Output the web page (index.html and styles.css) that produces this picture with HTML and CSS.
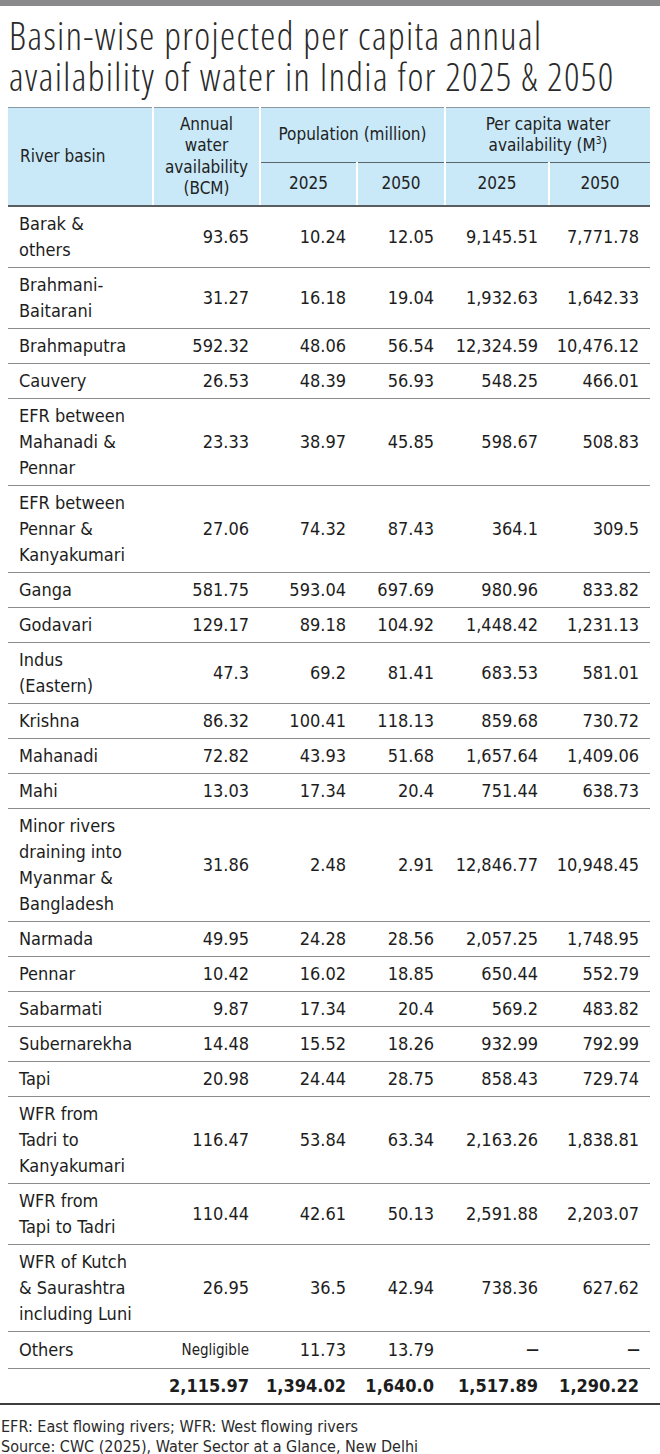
FILE: index.html
```html
<!DOCTYPE html>
<html>
<head>
<meta charset="utf-8">
<link rel="stylesheet" href="styles.css">
</head>
<body>
<div class="topbar"></div>
<h1 class="title"><span class="tl">Basin-wise projected per capita annual</span><span class="tl">availability of water in India for 2025 &amp; 2050</span></h1>
<table class="data">
<colgroup>
<col class="c1"><col class="c2"><col class="c3"><col class="c4"><col class="c5"><col class="c6">
</colgroup>
<thead>
<tr class="hr1">
<th rowspan="2" class="basin">River basin</th>
<th rowspan="2">Annual<br>water<br>availability<br>(BCM)</th>
<th colspan="2" class="grp">Population (million)</th>
<th colspan="2" class="grp">Per capita water<br>availability (M<sup>3</sup>)</th>
</tr>
<tr class="hr2">
<th>2025</th><th>2050</th><th>2025</th><th>2050</th>
</tr>
</thead>
<tbody>
<tr><td>Barak &amp;<br>others</td><td>93.65</td><td>10.24</td><td>12.05</td><td>9,145.51</td><td>7,771.78</td></tr>
<tr><td>Brahmani-<br>Baitarani</td><td>31.27</td><td>16.18</td><td>19.04</td><td>1,932.63</td><td>1,642.33</td></tr>
<tr><td>Brahmaputra</td><td>592.32</td><td>48.06</td><td>56.54</td><td>12,324.59</td><td>10,476.12</td></tr>
<tr><td>Cauvery</td><td>26.53</td><td>48.39</td><td>56.93</td><td>548.25</td><td>466.01</td></tr>
<tr><td>EFR between<br>Mahanadi &amp;<br>Pennar</td><td>23.33</td><td>38.97</td><td>45.85</td><td>598.67</td><td>508.83</td></tr>
<tr><td>EFR between<br>Pennar &amp;<br>Kanyakumari</td><td>27.06</td><td>74.32</td><td>87.43</td><td>364.1</td><td>309.5</td></tr>
<tr><td>Ganga</td><td>581.75</td><td>593.04</td><td>697.69</td><td>980.96</td><td>833.82</td></tr>
<tr><td>Godavari</td><td>129.17</td><td>89.18</td><td>104.92</td><td>1,448.42</td><td>1,231.13</td></tr>
<tr><td>Indus<br>(Eastern)</td><td>47.3</td><td>69.2</td><td>81.41</td><td>683.53</td><td>581.01</td></tr>
<tr><td>Krishna</td><td>86.32</td><td>100.41</td><td>118.13</td><td>859.68</td><td>730.72</td></tr>
<tr><td>Mahanadi</td><td>72.82</td><td>43.93</td><td>51.68</td><td>1,657.64</td><td>1,409.06</td></tr>
<tr><td>Mahi</td><td>13.03</td><td>17.34</td><td>20.4</td><td>751.44</td><td>638.73</td></tr>
<tr><td>Minor rivers<br>draining into<br>Myanmar &amp;<br>Bangladesh</td><td>31.86</td><td>2.48</td><td>2.91</td><td>12,846.77</td><td>10,948.45</td></tr>
<tr><td>Narmada</td><td>49.95</td><td>24.28</td><td>28.56</td><td>2,057.25</td><td>1,748.95</td></tr>
<tr><td>Pennar</td><td>10.42</td><td>16.02</td><td>18.85</td><td>650.44</td><td>552.79</td></tr>
<tr><td>Sabarmati</td><td>9.87</td><td>17.34</td><td>20.4</td><td>569.2</td><td>483.82</td></tr>
<tr><td>Subernarekha</td><td>14.48</td><td>15.52</td><td>18.26</td><td>932.99</td><td>792.99</td></tr>
<tr><td>Tapi</td><td>20.98</td><td>24.44</td><td>28.75</td><td>858.43</td><td>729.74</td></tr>
<tr><td>WFR from<br>Tadri to<br>Kanyakumari</td><td>116.47</td><td>53.84</td><td>63.34</td><td>2,163.26</td><td>1,838.81</td></tr>
<tr><td>WFR from<br>Tapi to Tadri</td><td>110.44</td><td>42.61</td><td>50.13</td><td>2,591.88</td><td>2,203.07</td></tr>
<tr><td>WFR of Kutch<br>&amp; Saurashtra<br>including Luni</td><td>26.95</td><td>36.5</td><td>42.94</td><td>738.36</td><td>627.62</td></tr>
<tr><td>Others</td><td class="small">Negligible</td><td>11.73</td><td>13.79</td><td><span class="dash">&ndash;</span></td><td><span class="dash">&ndash;</span></td></tr>
<tr class="total"><td></td><td>2,115.97</td><td>1,394.02</td><td>1,640.0</td><td>1,517.89</td><td>1,290.22</td></tr>
</tbody>
</table>
<div class="rule"></div>
<p class="notes">EFR: East flowing rivers; WFR: West flowing rivers<br>Source: CWC (2025), Water Sector at a Glance, New Delhi</p>
</body>
</html>
```

FILE: styles.css
```css
html, body {
  margin: 0;
  padding: 0;
  background: #ffffff;
}
body {
  font-family: "DejaVu Sans Condensed", "Liberation Sans Narrow", "Liberation Sans", sans-serif;
  color: #1d1d1d;
  width: 660px;
}
.topbar {
  height: 6px;
  background: #8a8a8c;
}
.title {
  margin: 9px 0 0 9px;
  font-family: "Open Sans", sans-serif;
  font-weight: 300;
  font-stretch: 75%;
  font-size: 38px;
  letter-spacing: 1.4px;
  color: #2a2a2a;
  height: 92px;
}
.tl {
  display: block;
  height: 41px;
  line-height: 41px;
  white-space: nowrap;
}
.data {
  margin-left: 8px;
  width: 642px;
  border-collapse: collapse;
  table-layout: fixed;
}
.c1 { width: 145px; }
.c2 { width: 107px; }
.c3 { width: 97px; }
.c4 { width: 88px; }
.c5 { width: 104px; }
.c6 { width: 101px; }
.data th {
  background: #c9e9f8;
  font-weight: normal;
  font-size: 17px;
  line-height: 21.5px;
  text-align: center;
  padding: 0 4px;
  border-left: 2px solid #ffffff;
  color: #222;
}
.data th:first-child { border-left: none; }
.hr1 th { border-top: 1px solid #8a9aa3; height: 54px; }
.hr1 th.basin { text-align: left; padding-left: 12px; border-left: none; }
.hr1 th.grp { border-bottom: 1px solid #59646b; }
.hr2 th { height: 42px; border-bottom: 2px solid #5a5d60; }
.hr2 th:first-child { border-left: 2px solid #ffffff; }
.hr1 th[rowspan] { border-bottom: 2px solid #5a5d60; }
.data sup { font-size: 10px; vertical-align: 7px; line-height: 0; }
.data td {
  font-size: 18px;
  line-height: 26px;
  padding: 4px 11px 4px 4px;
  text-align: right;
  border-bottom: 1px solid #8b8b8b;
  white-space: nowrap;
}
.data td:first-child {
  text-align: left;
  padding-left: 11px;
  padding-right: 0;
}
.data td.small { font-size: 15px; }
.dash {
  display: inline-block;
  font-size: 24px;
  line-height: 26px;
  transform: scaleX(1.3);
}
.data tr.total td {
  font-weight: bold;
  border-bottom: none;
}
.rule {
  height: 2px;
  background: #3d3d3d;
  width: 660px;
}
.notes {
  margin: 12px 0 0 1px;
  font-size: 16px;
  line-height: 20px;
  color: #2a2a2a;
}
```
